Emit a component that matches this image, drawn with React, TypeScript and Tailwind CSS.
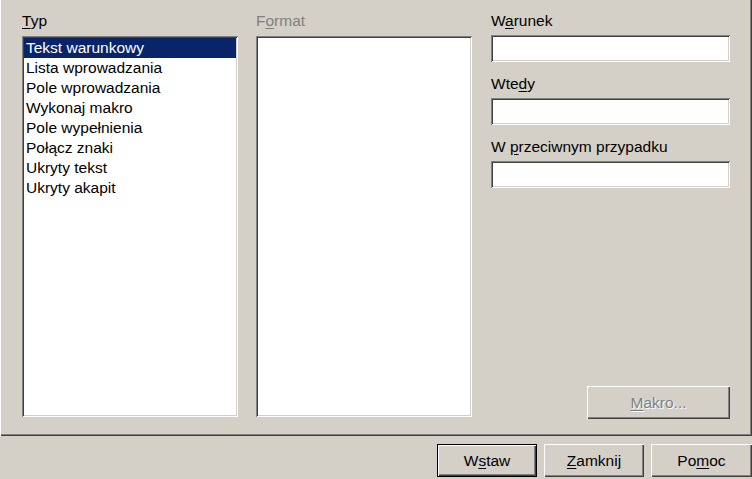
import React from "react";

const sunken =
  "shadow-[inset_1px_1px_0_#808080,inset_-1px_-1px_0_#ffffff,inset_2px_2px_0_#404040,inset_-2px_-2px_0_#d4d0c8]";
const raised =
  "shadow-[inset_1px_1px_0_#ffffff,inset_-1px_-1px_0_#404040,inset_-2px_-2px_0_#808080]";
const raisedDefault =
  "shadow-[inset_0_0_0_1px_#000000,inset_2px_2px_0_#ffffff,inset_-2px_-2px_0_#404040,inset_-3px_-3px_0_#808080]";

function U({ children }: { children: React.ReactNode }) {
  return <span className="underline underline-offset-2">{children}</span>;
}

const items = [
  "Tekst warunkowy",
  "Lista wprowadzania",
  "Pole wprowadzania",
  "Wykonaj makro",
  "Pole wypełnienia",
  "Połącz znaki",
  "Ukryty tekst",
  "Ukryty akapit",
];

export default function App() {
  return (
    <div
      className="w-[752px] h-[479px] bg-[#d4d0c8] flex flex-col text-[15.5px] text-black overflow-hidden"
      style={{ fontFamily: '"Liberation Sans", Arial, sans-serif' }}
    >
      <div className="h-[436px] flex pl-[22px] pt-[11px] shadow-[inset_1px_0_0_#ffffff,inset_-1px_-1px_0_#404040,inset_-2px_-2px_0_#808080]">
        <div className="w-[216px] flex flex-col">
          <div className="h-[20px] leading-[20px] mb-[5px]">
            <U>T</U>yp
          </div>
          <div className={`h-[381px] bg-white p-[2px] ${sunken}`}>
            {items.map((t, i) => (
              <div
                key={t}
                className={`h-[20px] leading-[20px] pl-[2px] whitespace-nowrap ${
                  i === 0 ? "bg-[#0a246a] text-white" : ""
                }`}
              >
                {t}
              </div>
            ))}
          </div>
        </div>
        <div className="w-[216px] ml-[18px] flex flex-col">
          <div className="h-[20px] leading-[20px] mb-[5px] text-[#808080]">
            F<U>o</U>rmat
          </div>
          <div className={`h-[381px] bg-white ${sunken}`} />
        </div>
        <div className="w-[239px] ml-[19px] flex flex-col">
          <div className="h-[20px] leading-[20px] mb-[4px]">
            W<U>a</U>runek
          </div>
          <div className={`h-[27px] bg-white ${sunken}`} />
          <div className="h-[20px] leading-[20px] mt-[12px] mb-[4px]">
            Wte<U>d</U>y
          </div>
          <div className={`h-[27px] bg-white ${sunken}`} />
          <div className="h-[20px] leading-[20px] mt-[12px] mb-[4px]">
            W <U>p</U>rzeciwnym przypadku
          </div>
          <div className={`h-[27px] bg-white ${sunken}`} />
          <div className="mt-auto mb-[17px] flex justify-end">
            <div
              className={`w-[143px] h-[33px] flex items-center justify-center text-[#808080] ${raised}`}
            >
              <span className="[text-shadow:1px_1px_0_#ffffff]">
                <U>M</U>akro...
              </span>
            </div>
          </div>
        </div>
      </div>
      <div className="flex justify-end pt-[8px] gap-[7px]">
        <div
          className={`w-[100px] h-[33px] flex items-center justify-center ${raisedDefault}`}
        >
          <span>
            W<U>s</U>taw
          </span>
        </div>
        <div
          className={`w-[100px] h-[33px] flex items-center justify-center ${raised}`}
        >
          <span>
            <U>Z</U>amknij
          </span>
        </div>
        <div
          className={`w-[101px] h-[33px] flex items-center justify-center ${raised}`}
        >
          <span>
            Po<U>m</U>oc
          </span>
        </div>
      </div>
    </div>
  );
}
